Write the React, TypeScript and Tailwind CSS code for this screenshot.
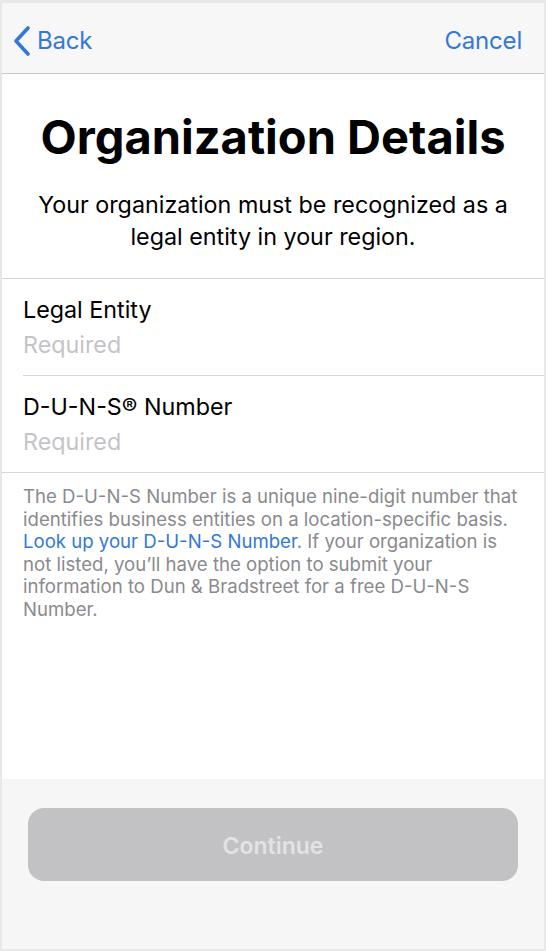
export default function App() {
  return (
    <div
      className="w-[546px] h-[951px] bg-[#e8e8e8] p-[2px] pt-[3px] flex flex-col overflow-hidden"
      style={{ fontFamily: "Inter, 'Noto Sans', sans-serif" }}
    >
      <div className="flex-1 flex flex-col bg-white">
        {/* nav bar */}
        <div className="h-[71px] shrink-0 bg-[#f7f7f7] border-b border-[#c9c9cc] flex items-center justify-between pl-[10px] pr-[22px] pt-[6px]">
          <button className="flex items-center text-[#3478d6] text-[24px] tracking-[-0.2px]">
            <svg width="20" height="32" viewBox="0 0 20 32" fill="none">
              <polyline
                points="16,3 4,16 16,29"
                stroke="#3478d6"
                strokeWidth="3.6"
                strokeLinecap="round"
                strokeLinejoin="round"
              />
            </svg>
            <span className="ml-[5px]">Back</span>
          </button>
          <button className="text-[#3478d6] text-[24px] tracking-[-0.2px]">Cancel</button>
        </div>

        {/* header */}
        <div className="shrink-0 flex flex-col items-center px-4 pt-[35px] pb-[25px] border-b border-[#d6d6d8]">
          <h1 className="text-[47px] leading-[56px] font-bold text-black whitespace-nowrap">
            Organization Details
          </h1>
          <p className="mt-[24px] text-center text-[23.3px] leading-[32px] text-black px-[6px]">
            Your organization must be recognized as a legal entity in your region.
          </p>
        </div>

        {/* fields */}
        <div className="shrink-0 pl-[21px] border-b border-[#d6d6d8]">
          <div className="py-[13px] border-b border-[#d6d6d8]">
            <div className="text-[23.3px] leading-[35px] text-black">Legal Entity</div>
            <div className="text-[23.3px] leading-[35px] text-[#c4c4c8]">Required</div>
          </div>
          <div className="py-[13px]">
            <div className="text-[23.3px] leading-[35px] text-black">D-U-N-S® Number</div>
            <div className="text-[23.3px] leading-[35px] text-[#c4c4c8]">Required</div>
          </div>
        </div>

        {/* footnote */}
        <div className="flex-1 pl-[21px] pr-[16px] pt-[12px]">
          <p className="text-[18.6px] leading-[22.5px] text-[#8a8a8e]">
            The D-U-N-S Number is a unique nine-digit number that identifies business entities on a
            location-specific basis.{" "}
            <span className="text-[#3478d6]">Look up your D-U-N-S Number</span>. If your organization is
            not listed, you’ll have the option to submit your information to Dun &amp; Bradstreet for a free
            D-U-N-S Number.
          </p>
        </div>

        {/* bottom */}
        <div className="h-[170px] shrink-0 bg-[#f6f6f6] px-[26px] pt-[29px]">
          <button className="w-full h-[73px] pt-[3px] rounded-[16px] bg-[#c2c2c4] text-[#e3e3e5] text-[23px] font-semibold">
            Continue
          </button>
        </div>
      </div>
    </div>
  );
}
